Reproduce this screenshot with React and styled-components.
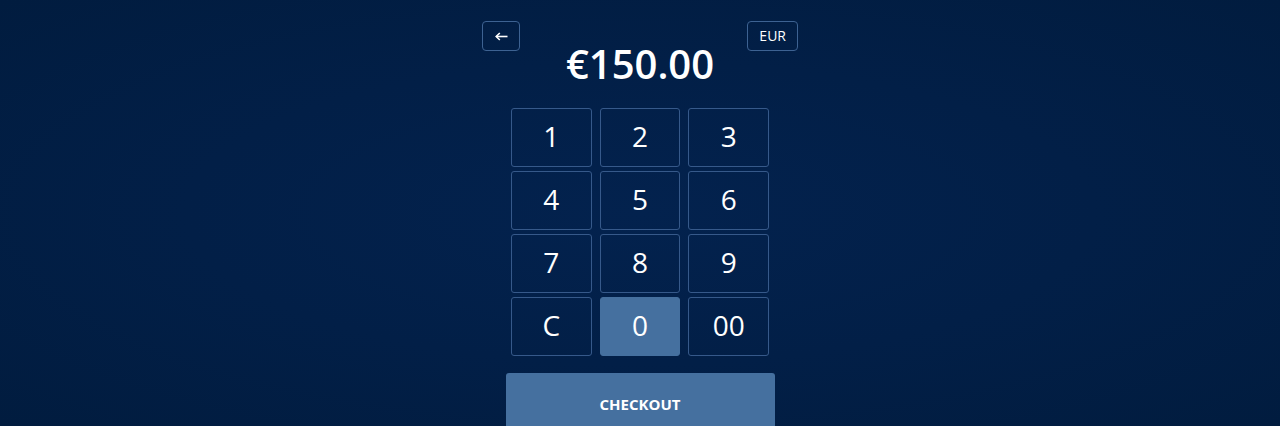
import React, { useState } from 'react';
import styled, { createGlobalStyle } from 'styled-components';

const GlobalStyle = createGlobalStyle`
  html, body {
    margin: 0;
    padding: 0;
    height: 100%;
  }
  body {
    font-family: "Open Sans", "Noto Sans", sans-serif;
    background: radial-gradient(ellipse at center, #03224e 0%, #021f47 50%, #011c3f 100%);
    color: #fff;
    overflow: hidden;
  }
`;

const Page = styled.div`
  min-height: 426px;
  display: flex;
  flex-direction: column;
  align-items: center;
  padding-top: 21px;
  box-sizing: border-box;
`;

const Header = styled.div`
  width: 316px;
  display: flex;
  justify-content: space-between;
  align-items: flex-start;
`;

const SmallButton = styled.button`
  height: 30px;
  min-width: 38px;
  padding: 0 ${p => (p.$icon ? '0' : '11px')};
  display: flex;
  align-items: center;
  justify-content: center;
  background: transparent;
  border: 1px solid #3d6292;
  border-radius: 4px;
  color: #fff;
  font-family: inherit;
  font-size: 14px;
  line-height: 1;
  cursor: pointer;
`;

const Amount = styled.div`
  font-size: 40px;
  font-weight: 600;
  line-height: 1;
  margin-top: -7px;
  margin-bottom: 24px;
`;

const Keypad = styled.div`
  width: 258px;
  display: grid;
  grid-template-columns: repeat(3, 1fr);
  grid-auto-rows: 59px;
  column-gap: 8px;
  row-gap: 4px;
`;

const Key = styled.button`
  background: ${p => (p.$active ? '#45709f' : 'transparent')};
  border: 1px solid ${p => (p.$active ? '#45709f' : '#36598a')};
  border-radius: 3px;
  color: #fff;
  font-family: inherit;
  font-size: 28px;
  font-weight: 400;
  padding: 0 0 4px;
  cursor: pointer;
`;

const Checkout = styled.button`
  margin-top: 17px;
  width: 269px;
  height: 64px;
  background: #45709f;
  border: none;
  border-radius: 3px;
  color: #fff;
  font-family: inherit;
  font-size: 15px;
  font-weight: 700;
  padding-bottom: 4px;
  cursor: pointer;
`;

const BackArrow = () => (
  <svg width="13" height="9" viewBox="0 0 13 9" fill="none">
    <path d="M1.5 4.5H12.5" stroke="#fff" strokeWidth="1.6" />
    <path d="M4.8 1L1.2 4.5L4.8 8" stroke="#fff" strokeWidth="1.6" />
  </svg>
);

const keys = ['1', '2', '3', '4', '5', '6', '7', '8', '9', 'C', '0', '00'];

export default function App() {
  const [pressed] = useState('0');
  return (
    <>
      <GlobalStyle />
      <Page>
        <Header>
          <SmallButton $icon aria-label="Back"><BackArrow /></SmallButton>
          <SmallButton>EUR</SmallButton>
        </Header>
        <Amount>€150.00</Amount>
        <Keypad>
          {keys.map(k => (
            <Key key={k} $active={k === pressed}>{k}</Key>
          ))}
        </Keypad>
        <Checkout>CHECKOUT</Checkout>
      </Page>
    </>
  );
}
